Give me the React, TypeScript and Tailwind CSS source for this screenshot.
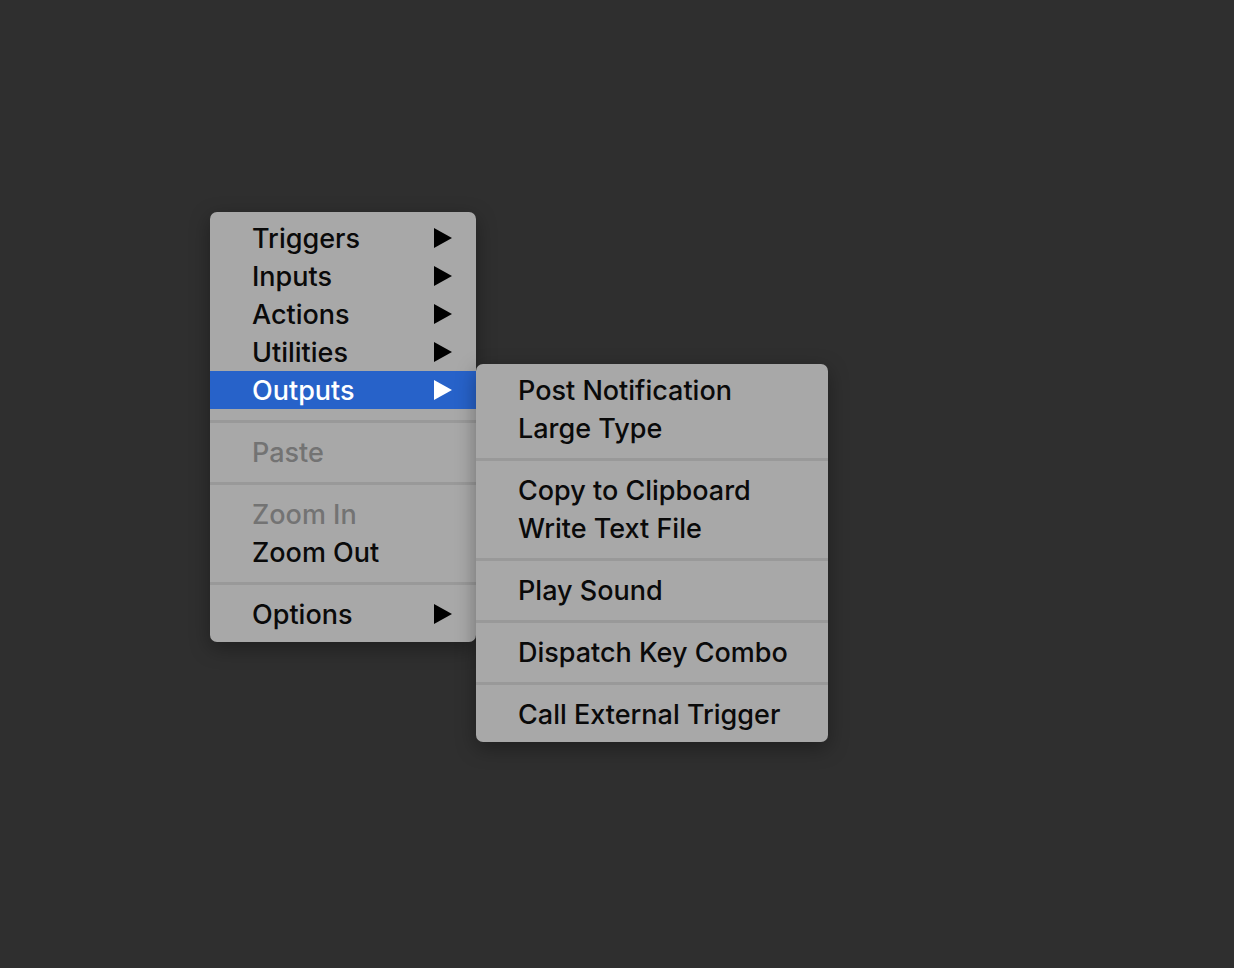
import { Fragment } from 'react'

type Item = { label: string; sub?: boolean; disabled?: boolean; active?: boolean } | 'sep'

const mainMenu: Item[] = [
  { label: 'Triggers', sub: true },
  { label: 'Inputs', sub: true },
  { label: 'Actions', sub: true },
  { label: 'Utilities', sub: true },
  { label: 'Outputs', sub: true, active: true },
  'sep',
  { label: 'Paste', disabled: true },
  'sep',
  { label: 'Zoom In', disabled: true },
  { label: 'Zoom Out' },
  'sep',
  { label: 'Options', sub: true },
]

const outputsMenu: Item[] = [
  { label: 'Post Notification' },
  { label: 'Large Type' },
  'sep',
  { label: 'Copy to Clipboard' },
  { label: 'Write Text File' },
  'sep',
  { label: 'Play Sound' },
  'sep',
  { label: 'Dispatch Key Combo' },
  'sep',
  { label: 'Call External Trigger' },
]

function Arrow({ white }: { white?: boolean }) {
  return (
    <svg width="18" height="20" viewBox="0 0 18 20" className="shrink-0">
      <path d="M0 0 L18 10 L0 20 Z" fill={white ? '#ffffff' : '#000000'} />
    </svg>
  )
}

function Menu({ items, width }: { items: Item[]; width: string }) {
  return (
    <div className={`${width} bg-[#a8a8a8] rounded-[7px] pt-[7px] pb-[9px] shadow-[0_6px_20px_rgba(0,0,0,0.35)] flex flex-col`}>
      {items.map((it, i) =>
        it === 'sep' ? (
          <div key={i} className="h-[24px] pt-[11px]">
            <div className="h-[3px] bg-[#999999]" />
          </div>
        ) : (
          <Fragment key={i}>
            <div
              className={`h-[38px] flex items-center justify-between pl-[42px] pr-[24px] text-[27px] leading-[38px] font-[450] ${
                it.active ? 'bg-[#2762c9] text-white' : it.disabled ? 'text-[#737373]' : 'text-[#0a0a0a]'
              }`}
            >
              <span className="translate-y-[1px]">{it.label}</span>
              {it.sub && <Arrow white={it.active} />}
            </div>
          </Fragment>
        )
      )}
    </div>
  )
}

export default function App() {
  return (
    <div className="w-[1234px] h-[968px] bg-[#2f2f2f] pt-[212px] pl-[210px] flex items-start" style={{ fontFamily: 'Inter, "Noto Sans", sans-serif' }}>
      <Menu items={mainMenu} width="w-[266px]" />
      <div className="mt-[152px]">
        <Menu items={outputsMenu} width="w-[352px]" />
      </div>
    </div>
  )
}
